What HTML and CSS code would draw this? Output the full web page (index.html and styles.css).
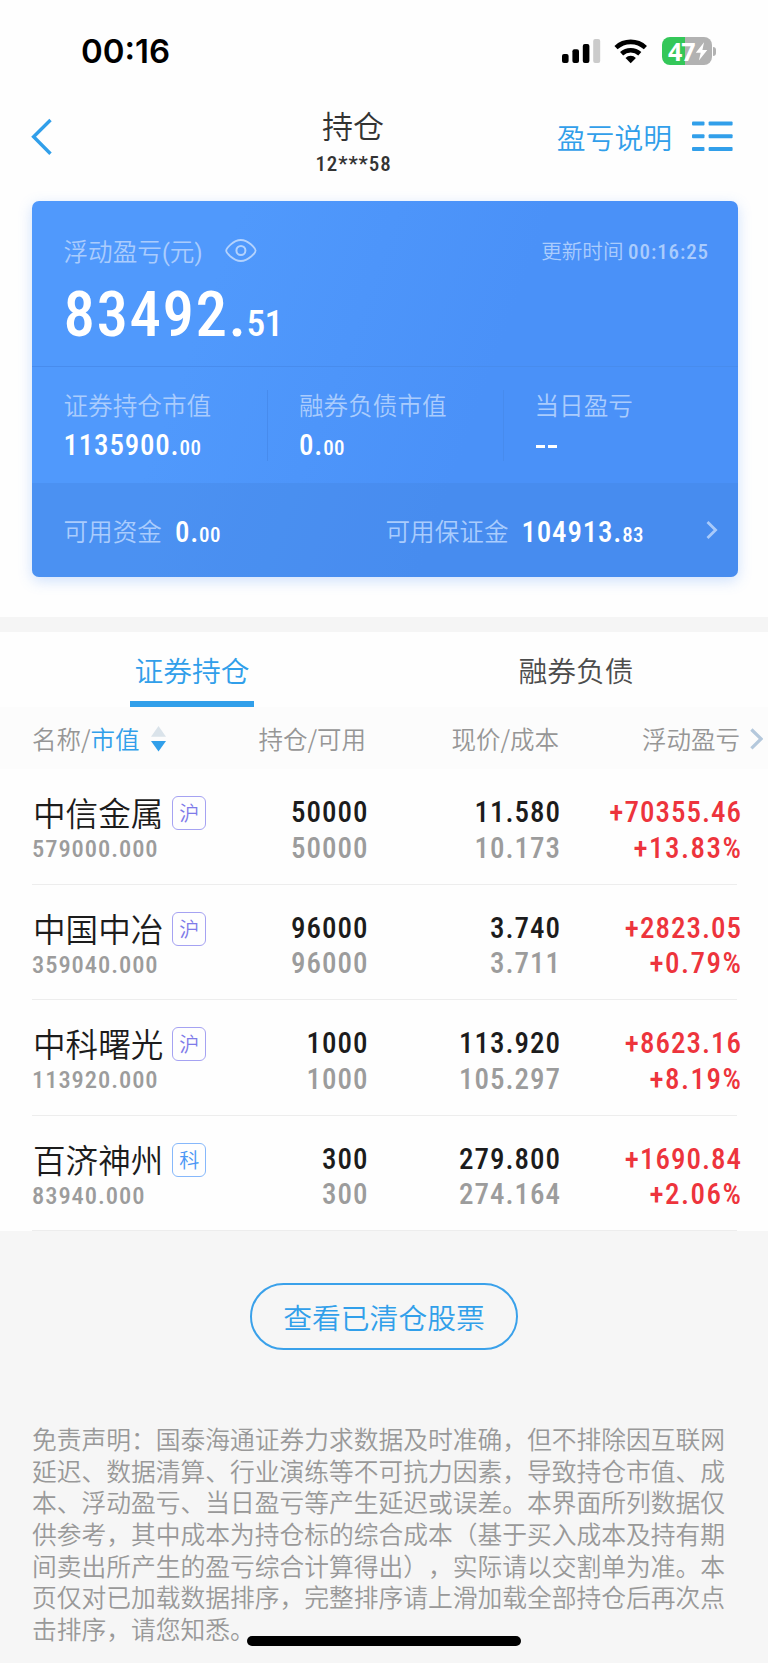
FILE: index.html
```html
<!DOCTYPE html>
<html lang="zh-CN">
<head>
<meta charset="utf-8">
<title>持仓</title>
<link rel="stylesheet" href="styles.css">
</head>
<body>
<div class="page">
  <header class="statusbar">
    <span class="clock">00:16</span>
    <div class="indicators">
      <svg class="signal" width="39" height="25" viewBox="0 0 39 25"><rect x="0" y="15" width="6.6" height="9" rx="2"/><rect x="10.4" y="10.3" width="6.6" height="13.7" rx="2"/><rect x="20.8" y="5" width="6.6" height="19" rx="2"/><rect x="31.2" y="0" width="7" height="24" rx="2" fill="#cbcbcb"/></svg>
      <svg class="wifi" width="34" height="25" viewBox="0 0 34 25"><g fill="none" stroke="#000" stroke-width="4.6"><path d="M2 8.6a21.6 21.6 0 0 1 29.4 0"/><path d="M7.6 14.7a13.6 13.6 0 0 1 18.2 0"/></g><path d="M16.7 24.2l-5.2-5.3a7.6 7.6 0 0 1 10.4 0z"/></svg>
      <div class="battery"><div class="battery-body"><span>47</span><svg width="13" height="19" viewBox="0 0 12 19"><path d="M8.6.3L.3 10.7h4.9L3.4 18.6 11.8 8H6.9z" fill="#fff"/></svg></div><i class="battery-tip"></i></div>
    </div>
  </header>

  <nav class="navbar">
    <svg class="back" width="24" height="40" viewBox="0 0 24 40"><path d="M19.500 3L2.600 19.800 19.500 36.800" fill="none" stroke="#319fea" stroke-width="3.400"/></svg>
    <div class="title"><h1>持仓</h1><span class="num">12***58</span></div>
    <div class="nav-right">
      <span>盈亏说明</span>
      <svg width="42" height="31" viewBox="0 0 42 31" fill="#319fea"><rect y="0.4" width="12.5" height="4" rx="1"/><rect x="16.6" y="0.4" width="24" height="4" rx="1"/><rect y="13.2" width="12.5" height="4" rx="1"/><rect x="16.6" y="13.2" width="24" height="4" rx="1"/><rect y="26" width="12.5" height="4" rx="1"/><rect x="16.6" y="26" width="24" height="4" rx="1"/></svg>
    </div>
  </nav>

  <section class="card">
    <div class="summary">
      <div class="summary-head">
        <span class="label">浮动盈亏<b class="paren">(</b>元<b class="paren">)</b></span>
        <svg class="eye" width="32" height="24" viewBox="0 0 32 24" fill="none" stroke="#b3d2fd" stroke-width="1.8"><path d="M1.200 11.600C1.200 9.600 8 1 15.800 1S30.600 9.600 30.600 11.600 23.600 22 15.800 22 1.200 13.600 1.200 11.600z"/><circle cx="15.900" cy="11.500" r="4.500" stroke-width="2"/></svg>
        <span class="updated">更新时间 <span class="num">00:16:25</span></span>
      </div>
      <div class="total num">83492.<small>51</small></div>
    </div>
    <div class="metrics">
      <div class="metric"><span class="label">证券持仓市值</span><span class="value num">1135900.<small>00</small></span></div>
      <div class="metric"><span class="label">融券负债市值</span><span class="value num">0.<small>00</small></span></div>
      <div class="metric"><span class="label">当日盈亏</span><span class="value num dashes"><i></i><i></i></span></div>
    </div>
    <div class="funds">
      <div class="fund"><span class="label">可用资金</span><span class="value num">0.<small>00</small></span></div>
      <div class="fund margin-fund"><span class="label">可用保证金</span><span class="value num">104913.<small>83</small></span></div>
      <svg width="12" height="20" viewBox="0 0 12 20"><path d="M1.500 2l8.100 8-8.100 8" fill="none" stroke="#a9cafa" stroke-width="2.800"/></svg>
    </div>
  </section>

  <section class="holdings">
    <div class="tabs">
      <div class="tab active"><span>证券持仓</span></div>
      <div class="tab"><span>融券负债</span></div>
    </div>
    <div class="columns">
      <span class="col-name">名称/<em>市值</em><svg width="15" height="26" viewBox="0 0 15 26"><path d="M7.500 0L15 10.800H0z" fill="#dae3ea"/><path d="M7.500 25.500L0 15h15z" fill="#319fea"/></svg></span>
      <span class="col-qty">持仓/可用</span>
      <span class="col-price">现价/成本</span>
      <span class="col-profit">浮动盈亏</span>
      <svg class="more" width="13" height="22" viewBox="0 0 13 22"><path d="M1.400 1.500l9.600 9.400-9.600 9.400" fill="none" stroke="#b4c8dc" stroke-width="3.200"/></svg>
    </div>
    <div class="rows">
      <div class="row">
        <div class="stock"><div class="name">中信金属<span class="badge">沪</span></div><div class="worth num">579000.000</div></div>
        <div class="pair num"><b>50000</b><span>50000</span></div>
        <div class="pair num"><b>11.580</b><span>10.173</span></div>
        <div class="pair num gain"><b>+70355.46</b><span>+13.83%</span></div>
      </div>
      <div class="row">
        <div class="stock"><div class="name">中国中冶<span class="badge">沪</span></div><div class="worth num">359040.000</div></div>
        <div class="pair num"><b>96000</b><span>96000</span></div>
        <div class="pair num"><b>3.740</b><span>3.711</span></div>
        <div class="pair num gain"><b>+2823.05</b><span>+0.79%</span></div>
      </div>
      <div class="row">
        <div class="stock"><div class="name">中科曙光<span class="badge">沪</span></div><div class="worth num">113920.000</div></div>
        <div class="pair num"><b>1000</b><span>1000</span></div>
        <div class="pair num"><b>113.920</b><span>105.297</span></div>
        <div class="pair num gain"><b>+8623.16</b><span>+8.19%</span></div>
      </div>
      <div class="row">
        <div class="stock"><div class="name">百济神州<span class="badge star">科</span></div><div class="worth num">83940.000</div></div>
        <div class="pair num"><b>300</b><span>300</span></div>
        <div class="pair num"><b>279.800</b><span>274.164</span></div>
        <div class="pair num gain"><b>+1690.84</b><span>+2.06%</span></div>
      </div>
    </div>
  </section>

  <footer class="footer">
    <div class="cleared">查看已清仓股票</div>
    <p class="disclaimer">免责声明：国泰海通证券力求数据及时准确，但不排除因互联网<br>延迟、数据清算、行业演练等不可抗力因素，导致持仓市值、成<br>本、浮动盈亏、当日盈亏等产生延迟或误差。本界面所列数据仅<br>供参考，其中成本为持仓标的综合成本（基于买入成本及持有期<br>间卖出所产生的盈亏综合计算得出），实际请以交割单为准。本<br>页仅对已加载数据排序，完整排序请上滑加载全部持仓后再次点<br>击排序，请您知悉。</p>
  </footer>
  <div class="home-bar"></div>
</div>
</body>
</html>
```

FILE: styles.css
```css
* { box-sizing: border-box; margin: 0; padding: 0; }
body {
  width: 768px;
  background: #f6f6f6;
  font-family: "Noto Sans CJK SC", sans-serif;
  font-weight: 350;
  color: #222;
  text-spacing-trim: space-all;
}
svg { display: block; flex: none; }
.page { position: relative; width: 768px; height: 1663px; overflow: hidden; display: flex; flex-direction: column; background: #fefefe; }
.num { font-family: Roboto, sans-serif; font-weight: 500; font-stretch: 85%; white-space: nowrap; }

/* status bar */
.statusbar { height: 100px; display: flex; align-items: flex-start; justify-content: space-between; padding: 31px 52px 0 81px; }
.clock { font: 600 33px/41px Inter, sans-serif; letter-spacing: 0; color: #000; }
.indicators { display: flex; align-items: flex-start; padding-top: 6px; }
.signal { margin-top: 2px; }
.wifi { margin: 2px 0 0 13px; }
.battery { display: flex; align-items: center; margin-left: 14px; }
.battery-body { width: 50px; height: 28px; border-radius: 8px; background: linear-gradient(90deg, #34c759 47%, #b2b2b2 47%); display: flex; align-items: center; padding-left: 6px; font: 700 25px/28px "Open Sans", sans-serif; letter-spacing: -1px; color: #fff; }
.battery-tip { width: 3px; height: 9px; margin-left: 1px; border-radius: 0 4px 4px 0; background: #b2b2b2; }

/* navigation */
.navbar { height: 101px; display: grid; grid-template-columns: 222px 200px 1fr; align-items: start; padding: 0 34px 0 31px; }
.back { margin-top: 16.5px; }
.title { display: flex; flex-direction: column; align-items: center; color: #333; }
.title h1 { font-size: 31px; font-weight: 350; line-height: 40px; margin-top: 5px; }
.title .num { font-size: 21px; line-height: 26px; margin-top: 6px; font-weight: 500; letter-spacing: 0.9px; margin-left: 1px; }
.nav-right { display: flex; justify-content: flex-end; font-size: 28.8px; line-height: 40px; color: #319fea; margin-top: 17px; }
.nav-right svg { margin: 4px 0 0 20px; }

/* summary card */
.card { width: 706.5px; height: 376px; margin-left: 31.5px; border-radius: 7px; background: linear-gradient(110deg, #5099fc 25%, #4a91f8 62%); box-shadow: 0 4px 14px rgba(74, 144, 247, .26); overflow: hidden; color: #fff; flex: none; }
.label { font-size: 24.6px; line-height: 30px; color: #aaccfd; white-space: nowrap; }
.summary { height: 165px; padding: 34px 29px 0 32px; }
.summary-head { display: flex; height: 30px; }
.paren { font: 400 23px/20px Roboto, sans-serif; }
.eye { margin: 4px 0 0 23px; }
.updated { margin-left: auto; font-size: 20.6px; line-height: 31px; color: #aaccfd; }
.updated .num { font-size: 21px; line-height: 0; font-weight: 500; letter-spacing: 0.9px; }
.total { margin-top: 18px; font-size: 63px; line-height: 63px; letter-spacing: 1.5px; }
.total small { font-size: 37.5px; line-height: 0; letter-spacing: -0.8px; margin-left: -1px; font-weight: 500; }
.metrics { height: 117px; border-top: 1px solid #488ced; display: grid; grid-template-columns: repeat(3, 1fr); padding-top: 23px; }
.metric { height: 71px; padding-left: 32px; display: flex; flex-direction: column; }
.metric + .metric { border-left: 1px solid #478bed; padding-left: 31px; }
.metric .label { margin-top: -1px; }
.metric .value { margin-top: 8px; line-height: 36px; }
.value { font-size: 29px; letter-spacing: 0.8px; }
.value small { font-size: 21px; line-height: 0; letter-spacing: 0.4px; }
.dashes { display: flex; gap: 3px; align-items: center; height: 36px; margin-left: 1px; }
.dashes i { width: 9px; height: 3.500px; background: #fff; margin-top: 5px; }
.funds { height: 94px; background: rgba(65, 130, 220, .3); display: flex; align-items: center; padding: 0 20px 0 32px; }
.fund { display: flex; align-items: center; gap: 13px; width: 322px; }
.margin-fund { width: auto; }
.fund .value { line-height: 36px; margin-top: 3px; }
.funds > svg { margin-left: auto; }

/* holdings */
.holdings { margin-top: 39.500px; border-top: 15.500px solid #f5f5f5; flex: none; }
.tabs { height: 75.500px; display: grid; grid-template-columns: 1fr 1fr; justify-items: center; }
.tab { height: 75.500px; width: 124px; text-align: center; font-size: 28.800px; line-height: 76px; color: #4c4c4c; }
.tab.active { color: #319fea; border-bottom: 6px solid #319fea; }
.columns { height: 62px; background: #fcfcfc; display: flex; align-items: center; padding-left: 32px; font-size: 24.500px; line-height: 36px; color: #969696; padding-top: 1px; }
.columns em { font-style: normal; color: #319fea; }
.col-name { width: 180px; display: flex; align-items: center; white-space: nowrap; }
.col-name svg { margin-left: 11px; }
.col-qty, .col-price, .col-profit { text-align: right; white-space: nowrap; }
.col-qty { width: 154px; }
.col-price { width: 193px; }
.col-profit { width: 181px; }
.more { margin-left: 10px; }
.row { height: 115.500px; margin: 0 26px 0 32px; display: grid; grid-template-columns: 180px 156.500px 192.500px 181px; position: relative; }
.row::after { content: ""; position: absolute; left: 0; right: 5px; bottom: 0; height: 1px; background: #ededed; }
.stock { padding-top: 22px; color: #1c1c1c; }
.name { display: flex; align-items: center; height: 42px; font-size: 32.600px; line-height: 40px; white-space: nowrap; margin-left: 1px; }
.badge { width: 34px; height: 34px; margin-left: 9px; margin-top: 2px; border: 1.500px solid #a5a2f2; border-radius: 6px; font-size: 20px; line-height: 31px; text-align: center; color: #7f7be9; }
.badge.star { border-color: #86b8fb; color: #4a96f5; }
.worth { font-size: 24.500px; line-height: 32px; font-weight: 500; letter-spacing: 0.950px; color: #9c9c9c; }
.pair { display: flex; flex-direction: column; text-align: right; font-size: 29px; line-height: 35.500px; letter-spacing: 1px; padding-top: 26px; color: #9c9c9c; }
.pair b { font-weight: 500; color: #1c1c1c; }
.pair span { font-weight: 500; letter-spacing: 1px; }
.pair.gain b, .pair.gain span { color: #ed343c; }
.pair.gain span { letter-spacing: 1.500px; margin-right: -0.500px; }

/* footer */
.footer { flex: 1; background: #f6f6f6; display: flex; flex-direction: column; }
.cleared { width: 268px; height: 67px; margin: 52px 0 0 250px; border: 2px solid #3aa1ea; border-radius: 34px; text-align: center; font-size: 28.800px; line-height: 64px; color: #319fea; }
.disclaimer { margin: 73px 0 0 32px; font-size: 24.750px; line-height: 31.640px; color: #999; white-space: nowrap; }
.home-bar { position: absolute; left: 247px; top: 1636px; width: 274px; height: 10px; border-radius: 5px; background: #000; }
```
